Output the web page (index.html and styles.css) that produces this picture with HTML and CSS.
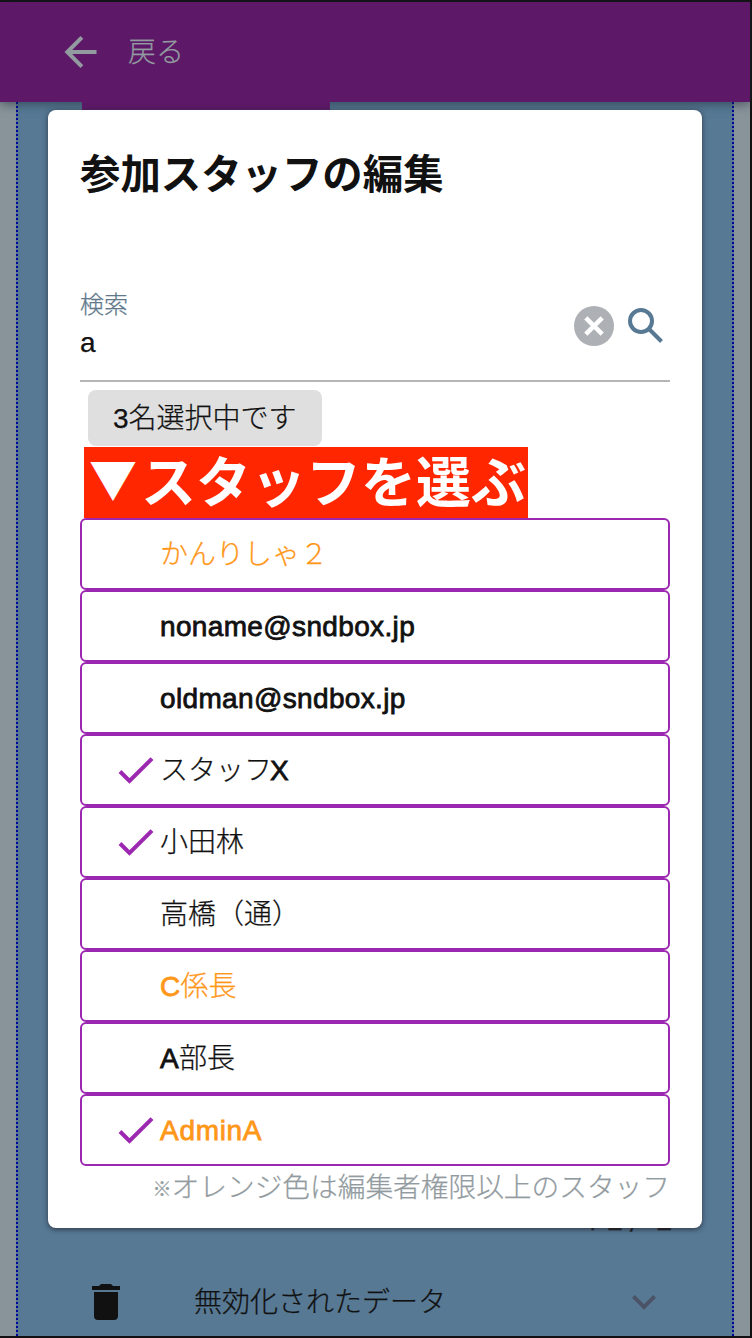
FILE: index.html
```html
<!DOCTYPE html>
<html lang="ja">
<head>
<meta charset="utf-8">
<title>参加スタッフの編集</title>
<link rel="stylesheet" href="styles.css">
</head>
<body>
<div class="screen">
  <header class="appbar">
    <svg class="back" viewBox="0 0 32 32"><path d="M32 14H7.7L18.8 2.8 16 0 0 16l16 16 2.8-2.8L7.7 18H32z"/></svg>
    <span>戻る</span>
  </header>
  <main class="page">
    <div class="tab"></div>
    <div class="counter"><span>1</span><span>2</span><span>/</span><span class="total">2</span></div>
    <div class="disabled-row">
      <svg class="trash" viewBox="0 0 28 36"><path d="M2 8h24v24a4 4 0 0 1-4 4H6a4 4 0 0 1-4-4zM28 2v4H0V2h7l2-2h10l2 2z"/></svg>
      <span class="disabled-label">無効化されたデータ</span>
      <svg class="chevron" viewBox="0 0 24 15"><path d="M2.8 0 12 9.2 21.2 0 24 2.8 12 14.8 0 2.8z"/></svg>
    </div>
  </main>
  <section class="dialog">
    <h1 class="title">参加スタッフの編集</h1>
    <div class="search">
      <div class="field">
        <span class="label">検索</span>
        <span class="value">a</span>
      </div>
      <svg class="clear" viewBox="0 0 40 40"><circle cx="20" cy="20" r="20"/><path d="M11.8 11.8 28.2 28.2M28.2 11.8 11.8 28.2"/></svg>
      <svg class="glass" viewBox="0 0 36 36"><circle cx="13" cy="13" r="11"/><path d="M21.5 21.5 33.5 33.5"/></svg>
    </div>
    <div class="chip">3名選択中です</div>
    <h2 class="prompt"><span class="triangle">▼</span>スタッフを選ぶ</h2>
    <ul class="staff">
      <li class="editor">かんりしゃ２</li>
      <li><b>noname@sndbox.jp</b></li>
      <li><b>oldman@sndbox.jp</b></li>
      <li><svg class="check" viewBox="0 0 36 27"><path d="M2 14.5 11.5 24 34 1.6"/></svg>スタッフ<b class="suffix">X</b></li>
      <li><svg class="check" viewBox="0 0 36 27"><path d="M2 14.5 11.5 24 34 1.6"/></svg>小田林</li>
      <li>高橋（通）</li>
      <li class="editor"><b>C</b>係長</li>
      <li><b>A</b>部長</li>
      <li class="editor"><svg class="check" viewBox="0 0 36 27"><path d="M2 14.5 11.5 24 34 1.6"/></svg><b class="admin">AdminA</b></li>
    </ul>
    <p class="note"><span class="mark">※</span>オレンジ色は編集者権限以上のスタッフ</p>
  </section>
</div>
</body>
</html>
```
FILE: styles.css
```css
* { box-sizing: border-box; margin: 0; padding: 0; }
body { overflow: hidden; }
.screen {
  position: relative;
  display: flex;
  flex-direction: column;
  width: 752px;
  height: 1338px;
  border: solid #121012;
  border-width: 2px 2px 2px 0;
  background: #88939a;
  color: #111;
  font: 300 28px/40px "Liberation Sans", "Noto Sans CJK JP", sans-serif;
  -webkit-text-stroke: .25px currentColor;
}
.appbar {
  position: relative;
  display: flex;
  flex: none;
  align-items: center;
  gap: 31px;
  height: 100px;
  padding-left: 64px;
  background: #5d1867;
  color: #929ba0;
  box-shadow: 0 2px 10px rgba(30, 45, 55, .6);
}
.appbar span { padding-top: 2px; }
.back { width: 33px; height: 32px; fill: #929ba0; }
.page {
  display: flex;
  flex: 1;
  flex-direction: column;
  margin: 0 16px;
  border: dotted #00009b;
  border-width: 0 2px;
  background: #577994;
}
.tab { width: 248px; height: 10px; margin-left: 64px; background: #5d1867; z-index: 1; }
.counter { display: flex; height: 40px; margin: 1088px 0 0 566px; font: 400 28px/42px Roboto, sans-serif; gap: 7px; }
.total { margin-left: 8px; }
.disabled-row { display: flex; align-items: center; margin-top: 43px; height: 40px; padding: 0 76px 0 74px; }
.trash { width: 28px; height: 36px; margin-bottom: 2px; fill: #111; }
.disabled-label { flex: 1; margin-left: 74px; }
.chevron { width: 24px; height: 15px; margin-bottom: 2px; fill: #4b5366; }
.dialog {
  position: absolute;
  z-index: 2;
  top: 108px;
  left: 48px;
  display: flex;
  flex-direction: column;
  width: 654px;
  height: 1118px;
  padding: 34px 32px 0;
  border-radius: 8px;
  background: #fff;
  box-shadow: 0 2px 4px rgba(45, 50, 65, .65), 0 0 6px rgba(45, 50, 65, .35);
}
.title { height: 60px; font-size: 40.4px; line-height: 62px; font-weight: 700; -webkit-text-stroke: 0; }
.search {
  display: flex;
  height: 110px;
  margin-top: 68px;
  border-bottom: 2px solid #b5b5b6;
}
.field { display: flex; flex: 1; flex-direction: column; padding-top: 16px; }
.label { height: 34px; color: #60788a; font-size: 24px; line-height: 34px; }
.value { height: 40px; line-height: 42px; }
.clear { width: 40px; height: 40px; margin-top: 34px; fill: #adb0b4; }
.clear path { stroke: #fff; stroke-width: 4.5; }
.glass { width: 36px; height: 36px; margin: 36px 6px 0 14px; fill: none; stroke: #577994; stroke-width: 4; }
.chip { width: 234px; height: 56px; margin: 8px 0 0 8px; padding-left: 25px; border-radius: 8px; background: #dfdfdf; line-height: 57px; }
.prompt {
  display: flex;
  width: 444px;
  height: 71px;
  margin: 1px 0 0 4px;
  background: #ff2600;
  color: #fff;
  font: 700 55px/62px "Noto Sans CJK JP", sans-serif;
  white-space: nowrap;
  -webkit-text-stroke: 0;
}
.triangle { width: 52px; margin-left: 5px; font-size: 48px; line-height: 60px; }
.staff { list-style: none; }
.staff li {
  position: relative;
  display: flex;
  align-items: center;
  height: 72px;
  padding: 2px 0 0 78px;
  border: 2px solid #9c27b0;
  border-radius: 6px;
}
.staff b { font-weight: 400; letter-spacing: .35px; -webkit-text-stroke: .8px currentColor; }
.staff .suffix { margin-left: -2px; }
.staff .admin { letter-spacing: .7px; }
.staff .editor { color: #ff9719; }
.check { width: 36px; height: 27px; margin: -2px 6px 0 -42px; fill: none; stroke: #9c27b0; stroke-width: 4; }
.note { display: flex; justify-content: flex-end; height: 42px; color: #929ba0; font-size: 27.7px; line-height: 44px; white-space: nowrap; }
.mark { font-size: 19px; line-height: 48px; }
```
